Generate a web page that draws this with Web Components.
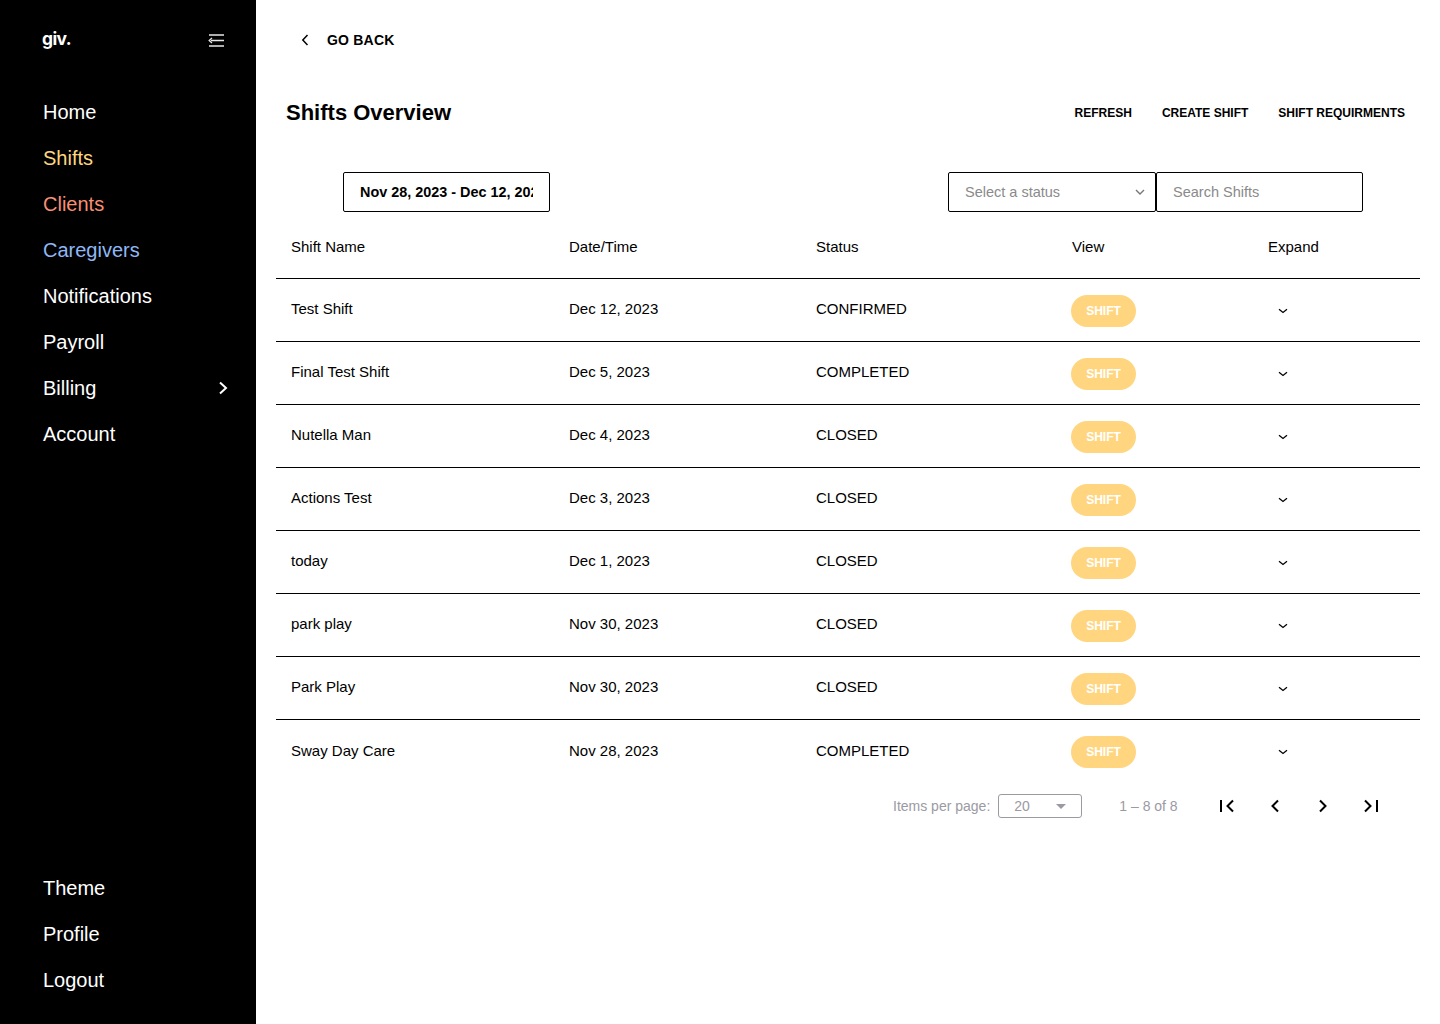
<!DOCTYPE html>
<html lang="en"><head><meta charset="utf-8"><title>Shifts Overview</title>
<style>
html,body{margin:0;height:100%;background:#fff}
body{font-family:"Liberation Sans",Arial,sans-serif;color:#000}
</style></head><body>
<app-shell>
  <side-bar slot="side"></side-bar>
  <page-header></page-header>
  <filter-bar></filter-bar>
  <shift-table></shift-table>
  <pager-bar></pager-bar>
</app-shell>
<script>
const FONT='"Liberation Sans",Arial,sans-serif';
function def(name,html,init){
  customElements.define(name,class extends HTMLElement{
    constructor(){super();const s=this.attachShadow({mode:'open'});s.innerHTML=typeof html==='function'?html(this):html;}
    connectedCallback(){init&&init.call(this)}
  });
}
def('app-shell',`<style>
:host{display:flex;width:1440px;height:1024px;overflow:hidden;font-family:${FONT}}
main{flex:1;min-width:0;display:flex;flex-direction:column;padding:0 20px}
</style><slot name="side"></slot><main><slot></slot></main>`);

const navIcon=`<svg width="10" height="14" viewBox="0 0 10 14" fill="none" stroke="#fff" stroke-width="2"><path d="M2 1.5 8 7l-6 5.5"/></svg>`;
def('nav-item',`<style>
:host{display:flex;align-items:center;justify-content:space-between;height:46px;font-size:20px;color:var(--c,#fff);padding-right:28px}
</style><slot></slot><slot name="end"></slot>`);
def('side-bar',`<style>
:host{display:flex;flex-direction:column;justify-content:space-between;width:256px;flex:none;height:1024px;background:#000;color:#fff;padding:0 0 21px 43px;box-sizing:border-box}
.top{display:flex;align-items:center;justify-content:space-between;height:80px;margin-bottom:9px;padding-right:32px}
.logo{font:700 17.5px/1 "Inter",${FONT};letter-spacing:-.6px;margin-top:-3px;margin-left:-1px}
svg{display:block}
</style>
<div><div class="top"><span class="logo">giv.</span>
<svg width="16" height="13" viewBox="0 0 16 13" fill="none" stroke="#e6e6e6" stroke-width="1.6"><path d="M1 1h15M3 6.5h13M1 12h15"/><path d="M4 4 1.2 6.5 4 9" stroke-width="1.3"/></svg></div>
<nav>
<nav-item>Home</nav-item>
<nav-item style="--c:#ffd67f">Shifts</nav-item>
<nav-item style="--c:#f98f75">Clients</nav-item>
<nav-item style="--c:#8fb8f5">Caregivers</nav-item>
<nav-item>Notifications</nav-item>
<nav-item>Payroll</nav-item>
<nav-item>Billing<span slot="end">${navIcon}</span></nav-item>
<nav-item>Account</nav-item>
</nav></div>
<nav>
<nav-item>Theme</nav-item>
<nav-item>Profile</nav-item>
<nav-item>Logout</nav-item>
</nav>`);

def('page-header',`<style>
:host{display:block}
.back{display:flex;align-items:center;height:80px;padding-left:25px;font-size:14px;font-weight:700;letter-spacing:.2px}
.back svg{margin-right:18px}
.row{display:flex;align-items:center;justify-content:space-between;height:66px;padding:0 15px 0 10px}
h1{margin:0;font-size:22px;font-weight:700;line-height:1}
.acts{display:flex;gap:30px;font-size:12px;font-weight:700}
</style>
<div class="back"><svg width="8" height="12" viewBox="0 0 8 12" fill="none" stroke="#000" stroke-width="1.5"><path d="M6.5 1 1.8 6l4.7 5"/></svg>GO BACK</div>
<div class="row"><h1>Shifts Overview</h1><div class="acts"><span>REFRESH</span><span>CREATE SHIFT</span><span>SHIFT REQUIRMENTS</span></div></div>`);

def('filter-bar',`<style>
:host{display:flex;height:40px;margin-top:26px;padding-left:67px;font-size:14.5px}
.box{box-sizing:border-box;height:40px;border:1px solid #000;border-radius:2px;display:flex;align-items:center;background:#fff}
.date{width:207px;padding:0 16px;font-weight:700;font-size:14.4px;margin-right:398px}
.date span{display:block;overflow:hidden;white-space:nowrap}
.sel{width:208px;padding:0 10px 0 16px;justify-content:space-between;color:#8a8a8a}
.search{width:207px;padding:0 16px;color:#8a8a8a;margin-left:0}
</style>
<div class="box date"><span>Nov 28, 2023 - Dec 12, 2023</span></div>
<div class="box sel"><span>Select a status</span><svg width="10" height="7" viewBox="0 0 10 7" fill="none" stroke="#777" stroke-width="1.4"><path d="M1 1l4 4 4-4"/></svg></div>
<div class="box search"><span>Search Shifts</span></div>`);

const rows=[["Test Shift","Dec 12, 2023","CONFIRMED"],["Final Test Shift","Dec 5, 2023","COMPLETED"],["Nutella Man","Dec 4, 2023","CLOSED"],["Actions Test","Dec 3, 2023","CLOSED"],["today","Dec 1, 2023","CLOSED"],["park play","Nov 30, 2023","CLOSED"],["Park Play","Nov 30, 2023","CLOSED"],["Sway Day Care","Nov 28, 2023","COMPLETED"]];
def('shift-table',`<style>
:host{display:block;font-size:15px}
.r{display:grid;grid-template-columns:278px 247px 255px 197px 1fr;align-items:center;box-sizing:border-box;height:63px;border-bottom:1px solid #000}
.r>*{padding-left:15px}
.r.h{height:67px;padding-top:4px}
.r.b{padding-bottom:1px}
.r:last-child{border-bottom:0}
.r>div{margin-top:-2px}
.btn{display:inline-flex;align-items:center;justify-content:center;width:65px;height:32px;border-radius:16px;background:#ffd67f;color:#fff;font-size:12px;font-weight:700;margin-left:0}
.v{padding-left:15px;margin-top:0!important;padding-top:2px}
svg{display:block;margin-left:10px}
.x{margin-top:0!important;padding-top:2px}
</style>
<div class="r h"><div>Shift Name</div><div>Date/Time</div><div>Status</div><div style="padding-left:16px">View</div><div>Expand</div></div>
${rows.map(r=>`<div class="r b"><div>${r[0]}</div><div>${r[1]}</div><div>${r[2]}</div><div class="v"><span class="btn">SHIFT</span></div><div class="x"><svg width="10" height="6" viewBox="0 0 10 6" fill="none" stroke="#000" stroke-width="1.3"><path d="M1 1.2 5 4.4 9 1.2"/></svg></div></div>`).join('')}`);

def('pager-bar',`<style>
:host{display:flex;align-items:center;height:48px;margin-top:-1px;padding-left:617px;font-size:14px;color:#9a9aa3}
.sel{box-sizing:border-box;width:84px;height:24px;margin:0 37px 0 8px;border:1px solid #9a9aa3;border-radius:3px;display:flex;align-items:center;justify-content:space-between;padding:0 15px}
.tri{width:0;height:0;border:5px solid transparent;border-top-color:#9a9aa3;border-bottom:0}
.btns{display:flex;margin-left:25px}
.btns span{width:48px;height:48px;display:flex;align-items:center;justify-content:center}
svg{display:block}
</style>
<span>Items per page:</span><div class="sel"><span>20</span><i class="tri"></i></div><span>1 – 8 of 8</span>
<div class="btns">
<span><svg width="16" height="14" viewBox="0 0 16 14" fill="none" stroke="#000" stroke-width="2"><path d="M2 1v12M14 1.5 8.5 7l5.5 5.500"/></svg></span>
<span><svg width="10" height="14" viewBox="0 0 10 14" fill="none" stroke="#000" stroke-width="2"><path d="M8 1.500 2.500 7 8 12.500"/></svg></span>
<span><svg width="10" height="14" viewBox="0 0 10 14" fill="none" stroke="#000" stroke-width="2"><path d="M2 1.500 7.500 7 2 12.500"/></svg></span>
<span><svg width="16" height="14" viewBox="0 0 16 14" fill="none" stroke="#000" stroke-width="2"><path d="M14 1v12M2 1.500 7.500 7 2 12.500"/></svg></span>
</div>`);
</script>
</body></html>
